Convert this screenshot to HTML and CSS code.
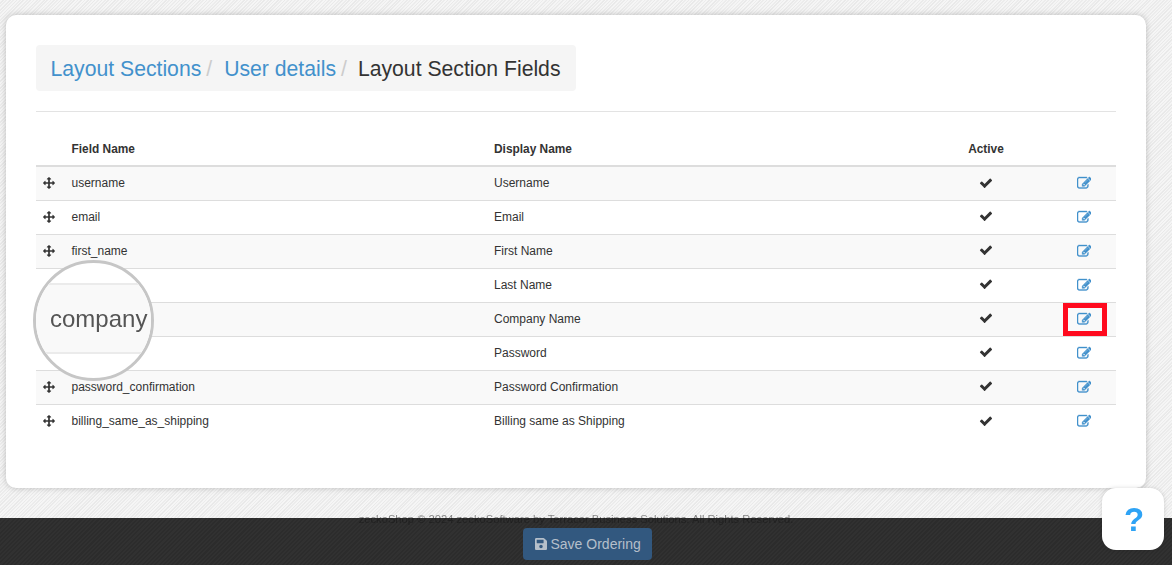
FILE: index.html
```html
<!DOCTYPE html>
<html lang="en">
<head>
<meta charset="utf-8">
<title>Layout Section Fields</title>
<link rel="stylesheet" href="styles.css">
</head>
<body>
<svg class="sprite" aria-hidden="true">
  <symbol id="i-move" viewBox="0 0 1792 1792"><path d="M1792 896q0 26-19 45l-256 256q-19 19-45 19t-45-19-19-45v-128h-384v384h128q26 0 45 19t19 45-19 45l-256 256q-19 19-45 19t-45-19l-256-256q-19-19-19-45t19-45 45-19h128v-384h-384v128q0 26-19 45t-45 19-45-19l-256-256q-19-19-19-45t19-45l256-256q19-19 45-19t45 19 19 45v128h384v-384h-128q-26 0-45-19t-19-45 19-45l256-256q19-19 45-19t45 19l256 256q19 19 19 45t-19 45-45 19h-128v384h384v-128q0-26 19-45t45-19 45 19l256 256q19 19 19 45z"/></symbol>
  <symbol id="i-check" viewBox="0 0 1792 1792"><path d="M1671 566q0 40-28 68l-724 724-136 136q-28 28-68 28t-68-28l-136-136-362-362q-28-28-28-68t28-68l136-136q28-28 68-28t68 28l294 295 656-657q28-28 68-28t68 28l136 136q28 28 28 68z"/></symbol>
  <symbol id="i-edit" viewBox="0 0 1792 1792"><path d="M888 1184l116-116-152-152-116 116v56h96v96h56zm440-720q-16-16-33 1l-350 350q-17 17-1 33t33-1l350-350q17-17 1-33zm80 594v190q0 119-84.5 203.5t-203.5 84.5h-832q-119 0-203.5-84.5t-84.5-203.5v-832q0-119 84.5-203.5t203.5-84.5h832q63 0 117 25 15 7 18 23 3 17-9 29l-49 49q-14 14-32 8-23-6-45-6h-832q-66 0-113 47t-47 113v832q0 66 47 113t113 47h832q66 0 113-47t47-113v-126q0-13 9-22l64-64q15-15 35-7t20 29zm-96-738l288 288-672 672h-288v-288zm444 132l-92 92-288-288 92-92q28-28 68-28t68 28l152 152q28 28 28 68t-28 68z"/></symbol>
  <symbol id="i-save" viewBox="0 0 448 512"><path d="M433.941 129.941l-83.882-83.882A48 48 0 0 0 316.118 32H48C21.490 32 0 53.490 0 80v352c0 26.510 21.490 48 48 48h352c26.510 0 48-21.490 48-48V163.882a48 48 0 0 0-14.059-33.941zM224 416c-35.346 0-64-28.654-64-64 0-35.346 28.654-64 64-64s64 28.654 64 64c0 35.346-28.654 64-64 64zm96-304.520V212c0 6.627-5.373 12-12 12H76c-6.627 0-12-5.373-12-12V108c0-6.627 5.373-12 12-12h228.520c3.183 0 6.235 1.264 8.485 3.515l3.480 3.480A11.996 11.996 0 0 1 320 111.480z"/></symbol>
</svg>

<main class="card">
  <nav class="crumbs">
    <a class="crumb-link" href="#">Layout Sections</a><span class="crumb-sep">/</span>
    <a class="crumb-link" href="#">User details</a><span class="crumb-sep">/</span>
    <span class="crumb-current">Layout Section Fields</span>
  </nav>
  <hr class="rule">
  <table class="fields">
    <thead>
      <tr><th class="col-grip"></th><th class="col-field">Field Name</th><th class="col-display">Display Name</th><th class="col-active">Active</th><th class="col-edit"></th></tr>
    </thead>
    <tbody>
      <tr><td><svg class="ico-move"><use href="#i-move"/></svg></td><td>username</td><td>Username</td><td class="mid"><svg class="ico-check"><use href="#i-check"/></svg></td><td class="mid"><svg class="ico-edit"><use href="#i-edit"/></svg></td></tr>
      <tr><td><svg class="ico-move"><use href="#i-move"/></svg></td><td>email</td><td>Email</td><td class="mid"><svg class="ico-check"><use href="#i-check"/></svg></td><td class="mid"><svg class="ico-edit"><use href="#i-edit"/></svg></td></tr>
      <tr><td><svg class="ico-move"><use href="#i-move"/></svg></td><td>first_name</td><td>First Name</td><td class="mid"><svg class="ico-check"><use href="#i-check"/></svg></td><td class="mid"><svg class="ico-edit"><use href="#i-edit"/></svg></td></tr>
      <tr class="under-lens"><td><svg class="ico-move"><use href="#i-move"/></svg></td><td><span class="field-text">last_name</span></td><td>Last Name</td><td class="mid"><svg class="ico-check"><use href="#i-check"/></svg></td><td class="mid"><svg class="ico-edit"><use href="#i-edit"/></svg></td></tr>
      <tr class="under-lens"><td><svg class="ico-move"><use href="#i-move"/></svg></td><td><span class="field-text">company</span></td><td>Company Name</td><td class="mid"><svg class="ico-check"><use href="#i-check"/></svg></td><td class="mid edit-marked"><svg class="ico-edit"><use href="#i-edit"/></svg><span class="red-box"></span></td></tr>
      <tr class="under-lens"><td><svg class="ico-move"><use href="#i-move"/></svg></td><td><span class="field-text">password</span></td><td>Password</td><td class="mid"><svg class="ico-check"><use href="#i-check"/></svg></td><td class="mid"><svg class="ico-edit"><use href="#i-edit"/></svg></td></tr>
      <tr><td><svg class="ico-move"><use href="#i-move"/></svg></td><td>password_confirmation</td><td>Password Confirmation</td><td class="mid"><svg class="ico-check"><use href="#i-check"/></svg></td><td class="mid"><svg class="ico-edit"><use href="#i-edit"/></svg></td></tr>
      <tr><td><svg class="ico-move"><use href="#i-move"/></svg></td><td>billing_same_as_shipping</td><td>Billing same as Shipping</td><td class="mid"><svg class="ico-check"><use href="#i-check"/></svg></td><td class="mid"><svg class="ico-edit"><use href="#i-edit"/></svg></td></tr>
    </tbody>
  </table>
</main>

<footer class="copyright">zeckoShop © 2024 zeckoSoftware by Terracor Business Solutions. All Rights Reserved.</footer>

<div class="magnifier"><span class="magnifier-band"><span class="magnifier-text">company</span></span></div>

<div class="action-bar">
  <button class="save-btn" type="button"><svg class="ico-save"><use href="#i-save"/></svg>Save Ordering</button>
</div>

<button class="help" type="button">?</button>
</body>
</html>
```

FILE: styles.css
```css
* { box-sizing: border-box; }

html, body { height: 565px; overflow: hidden; }

body {
  margin: 0;
  padding: 15px 26px 0 6px;
  font-family: "Liberation Sans", Arial, sans-serif;
  font-size: 12px;
  color: #333;
  background-color: #ececec;
  background-image:
    repeating-linear-gradient(-45deg, rgba(255, 255, 255, .5) 0, rgba(255, 255, 255, .5) 1.2px, transparent 1.2px, transparent 2.4px),
    repeating-linear-gradient(-45deg, rgba(0, 0, 0, .012) 0, rgba(0, 0, 0, .012) 2px, transparent 2px, transparent 5px);
}

.sprite { display: none; }

.card {
  height: 473px;
  padding: 30px;
  background: #fff;
  border-radius: 10px;
  box-shadow: 0 0 6px rgba(0, 0, 0, .22);
}

.crumbs {
  display: inline-flex;
  align-items: center;
  height: 46px;
  padding: 2px 15px 0 14.5px;
  background: #f5f5f5;
  border-radius: 4px;
  font-size: 21.2px;
  vertical-align: top;
}
.crumb-link { color: #4291cc; text-decoration: none; }
.crumb-sep { color: #ccc; padding: 0 12px 0 5px; }
.crumb-current { color: #333; margin-left: -1px; }

.rule {
  margin: 20px 0 0;
  border: 0;
  border-top: 1px solid #e3e3e3;
}

.fields {
  width: 100%;
  margin-top: 20px;
  border-collapse: collapse;
  table-layout: fixed;
}
.fields th {
  height: 34px;
  padding: 0 7.5px;
  text-align: left;
  font-weight: 700;
  font-size: 11.9px;
  border-bottom: 2px solid #ddd;
}
.fields td {
  height: 34px;
  padding: 0 7.5px;
  border-bottom: 1px solid #ddd;
}
.fields tbody tr:nth-child(odd) { background: #f9f9f9; }
.fields tbody tr:last-child td { border-bottom: 0; }

.col-grip { width: 28px; }
.col-field { width: 422.5px; }
.col-display { width: 433.5px; }
.col-active { width: 132px; }
.fields .col-active { text-align: center; }
.col-edit { width: 64px; }
.mid { text-align: center; }
.fields td:nth-child(1) { padding: 0 0 0 7px; }
.under-lens .ico-move, .under-lens .field-text { visibility: hidden; }

.ico-move, .ico-check, .ico-edit {
  display: inline-block;
  vertical-align: middle;
  position: relative;
  top: -1px;
}
.ico-move { width: 12px; height: 12px; fill: #333; }
.ico-check { width: 14px; height: 14px; fill: #333; }
.ico-edit { top: 0; width: 14.5px; height: 14.5px; fill: #4291cc; stroke: #4291cc; stroke-width: 50px; }

.edit-marked { position: relative; }
.red-box {
  position: absolute;
  left: 11px;
  top: 0;
  width: 44px;
  height: 33px;
  border: 5px solid #ff0a1e;
}

.copyright {
  position: relative;
  z-index: 3;
  margin-top: 25px;
  text-align: center;
  font-size: 11.2px;
  color: rgba(20, 20, 20, .5);
}

.magnifier {
  position: fixed;
  left: 32.5px;
  top: 260px;
  width: 121px;
  height: 121px;
  border-radius: 50%;
  border: 3px solid #c6c6c6;
  background: #fff;
  overflow: hidden;
  display: flex;
  align-items: center;
}
.magnifier-band {
  flex: 1;
  height: 71px;
  margin-top: -4px;
  display: flex;
  align-items: center;
  padding-left: 14.5px;
  background: #f9f9f9;
  border-top: 2px solid #ebebeb;
  border-bottom: 2px solid #ebebeb;
}
.magnifier-text { font-size: 24px; color: #555; filter: blur(.4px); }

.action-bar {
  position: fixed;
  left: 0;
  right: 0;
  bottom: 0;
  height: 47px;
  padding-top: 10px;
  padding-left: 2px;
  display: flex;
  justify-content: center;
  align-items: flex-start;
  background-color: #2c2c2c;
  background-image: repeating-linear-gradient(-45deg, rgba(255, 255, 255, .025) 0, rgba(255, 255, 255, .025) 1.5px, transparent 1.5px, transparent 3px);
}

.save-btn {
  display: inline-flex;
  align-items: center;
  gap: 4px;
  height: 32px;
  width: 129px;
  padding: 0 0 0 12px;
  border: 0;
  border-radius: 4px;
  background: #32587f;
  color: #b5bfca;
  font-family: inherit;
  font-size: 14px;
}
.ico-save { width: 12px; height: 14px; fill: #b5bfca; }

.help {
  position: fixed;
  z-index: 4;
  left: 1102px;
  top: 488px;
  width: 62px;
  height: 62px;
  border: 0;
  padding: 2px 0 0 2px;
  border-radius: 14px;
  background: #fff;
  box-shadow: 0 0 4px rgba(0, 0, 0, .15);
  color: #2ea3f5;
  font-family: inherit;
  font-size: 33px;
  font-weight: 700;
}
```
